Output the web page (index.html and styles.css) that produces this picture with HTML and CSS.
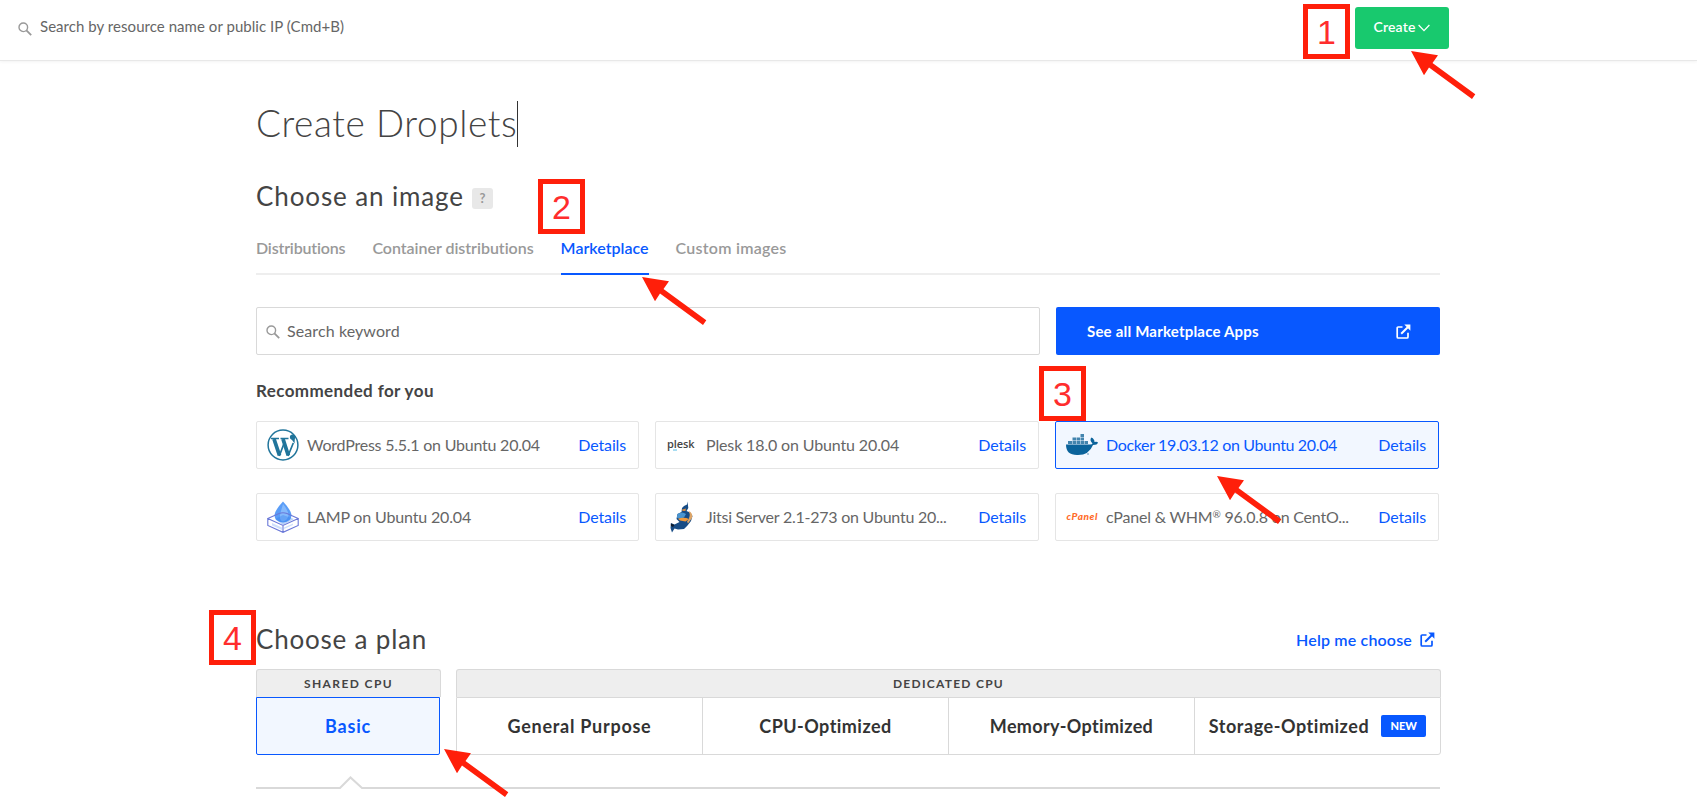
FILE: index.html
```html
<!DOCTYPE html>
<html lang="en">
<head>
<meta charset="utf-8">
<title>Create Droplets</title>
<link rel="stylesheet" href="styles.css">
</head>
<body>
<svg class="defs" width="0" height="0">
  <symbol id="search" viewBox="0 0 14 14"><circle cx="5.3" cy="5.3" r="4.3" fill="none" stroke="#999" stroke-width="1.4"/><path d="M8.4 8.4L13.2 13.2" stroke="#999" stroke-width="1.8"/></symbol>
  <symbol id="external" viewBox="0 0 15 15"><path d="M6.5 3H2.2Q1.2 3 1.2 4V13Q1.2 14 2.2 14H11Q12 14 12 13V8.8" fill="none" stroke="currentColor" stroke-width="1.7"/><path d="M5.2 9.8L12 3" stroke="currentColor" stroke-width="2"/><path d="M8.3 .6H14.4V6.7Z" fill="currentColor"/></symbol>
  <symbol id="arrow" viewBox="0 0 66 50"><path d="M0 0L27 4.3L21.500 12L64.300 43.300L61 48L18 16.500L13 24.300Z" fill="#ff1f0a"/></symbol>
</svg>
<header class="topbar">
  <div class="finder"><svg class="ico-search" width="14" height="14"><use href="#search"/></svg><span class="t-finder">Search by resource name or public IP (Cmd+B)</span></div>
  <button class="create"><span class="t-create">Create</span><svg width="12" height="8" viewBox="0 0 12 8"><path d="M.6 1L6 6.600L11.400 1" fill="none" stroke="#fff" stroke-width="1.300"/></svg></button>
</header>
<main class="page">
  <h1 class="title"><span class="t-title">Create Droplets</span><i class="caret"></i></h1>
  <div class="image-head"><h2 class="heading"><span class="t-image">Choose an image</span></h2><span class="hint">?</span></div>
  <nav class="tabs">
    <span class="tab t-tab1">Distributions</span>
    <span class="tab t-tab2">Container distributions</span>
    <span class="tab active">Marketplace</span>
    <span class="tab t-tab4">Custom images</span>
  </nav>
  <div class="search-row">
    <div class="search"><svg class="ico-search" width="14" height="14"><use href="#search"/></svg><span class="t-keyword">Search keyword</span></div>
    <div class="all-apps"><span class="t-apps">See all Marketplace Apps</span><svg width="15" height="15"><use href="#external"/></svg></div>
  </div>
  <h3 class="recommended"><span class="t-rec">Recommended for you</span></h3>
  <div class="cards">
    <div class="card">
      <svg class="logo" viewBox="0 0 32 32"><circle cx="16" cy="16" r="14.900" fill="none" stroke="#21759b" stroke-width="1.500"/><path d="M4 9.500H12M13.500 9.500H21.500" stroke="#21759b" stroke-width="1.400"/><path d="M7 10L12.500 26.500M16 10L21.300 26.500" stroke="#21759b" stroke-width="3.800"/><path d="M12.300 27L16.800 15M21 27L26.300 14" stroke="#21759b" stroke-width="1.700"/><circle cx="25.500" cy="8" r="2.600" fill="#21759b"/><path d="M22.900 8L27.500 14.500L28 7Z" fill="#21759b"/></svg>
      <span class="name t-wp">WordPress 5.5.1 on Ubuntu 20.04</span><a class="details">Details</a>
    </div>
    <div class="card">
      <svg class="logo" viewBox="0 0 32 32"><text x="1" y="18.500" textLength="27.500" class="plesk">plesk</text><path d="M7 21H11" stroke="#53bce6" stroke-width="1"/></svg>
      <span class="name t-plesk">Plesk 18.0 on Ubuntu 20.04</span><a class="details">Details</a>
    </div>
    <div class="card selected">
      <svg class="logo" viewBox="0 0 32 32"><path d="M0 15.500H24Q26.500 15.500 26.500 14.500Q23 11 25.500 8.500Q28.500 10 28.500 13Q31 12.300 32 13.500Q31.500 16 27 16Q23 26 12 26Q0 26.500 0 15.500Z" fill="#0b639b"/><path d="M2 12H6V15H2ZM6.500 12H10V15H6.500ZM10.500 12H14V15H10.500ZM14.500 12H18V15H14.500ZM18.500 12H22V15H18.500ZM6.500 8.500H10V11.500H6.500ZM10.500 8.500H14V11.500H10.500ZM14.500 8.500H18V11.500H14.500ZM14.500 5H18V8H14.500Z" fill="#4384ae"/><circle cx="22" cy="25" r="1" fill="#8fb3cc"/></svg>
      <span class="name t-docker">Docker 19.03.12 on Ubuntu 20.04</span><a class="details">Details</a>
    </div>
    <div class="card">
      <svg class="logo" viewBox="0 0 32 32"><path d="M16 .5Q24 9 24.500 14Q24.500 21 16 21.500Q7.500 21 7.500 14Q8 9 16 .5Z" fill="#5a9df7"/><path d="M16 3Q21 9 21.500 14Q21 19 16 20.500Q11 19 14 10Z" fill="#85b9fb"/><path d="M8 18L16 14L27 18L16 24Z" fill="#2f7bee" opacity=".35"/><path d="M.8 17.500L12 12.500Q16 11 20 12.500L31.200 17.500L16 24.500ZM.8 17.500V24.500L16 31.300L31.200 24.500V17.500M16 24.500V31" fill="none" stroke="#6a78d8" stroke-width="1.100"/><path d="M5 22L15 26.500V29L5 24.500ZM17 26.500L26 22.500V24L17 28Z" fill="#cfe0fc"/></svg>
      <span class="name t-lamp">LAMP on Ubuntu 20.04</span><a class="details">Details</a>
    </div>
    <div class="card">
      <svg class="logo" viewBox="0 0 32 32"><path d="M16 7L18 5L21 3.500L21.500 .5L22.300 7L20.500 10L24 11.500L26.500 15L25 20L21.500 24.500L18 28L12 28.500L8.500 27.500L6 31.500L4.500 27L5 22L8.500 23.500L13.500 21L10.500 18L11.500 13L15.500 11Z" fill="#174c86"/><path d="M11.500 13Q16 10 20 13L18 16.500Q13 18.500 10.800 16.500Z" fill="#4a94cf"/><path d="M12 17.800Q18 15.500 23 18L19.500 20.500L14 19.500Z" fill="#f39a3a"/><path d="M22.500 10Q27 11.500 26 17L22 22.500L21 20.500Q25.500 15 22.500 10Z" fill="#dda567"/><path d="M16 8.500L20 7.500L19.500 10H16.500Z" fill="#d08b45"/><path d="M4.800 22.500L8.500 24L7 26L5 25Z" fill="#101b2c"/></svg>
      <span class="name t-jitsi">Jitsi Server 2.1-273 on Ubuntu 20...</span><a class="details">Details</a>
    </div>
    <div class="card">
      <svg class="logo" viewBox="0 0 32 32"><text x=".5" y="19" textLength="31" class="cpanel">cPanel</text></svg>
      <span class="name t-cpanel">cPanel &amp; WHM<sup>®</sup> 96.0.8 on CentO...</span><a class="details">Details</a>
    </div>
  </div>
  <div class="plan-head"><h2 class="heading"><span class="t-plan">Choose a plan</span></h2><a class="help"><span class="t-help">Help me choose</span><svg width="15" height="15"><use href="#external"/></svg></a></div>
  <div class="plans">
    <section class="shared"><div class="group"><span class="t-shared">SHARED CPU</span></div><div class="basic"><span class="t-basic">Basic</span></div></section>
    <section class="dedicated"><div class="group"><span class="t-ded">DEDICATED CPU</span></div>
      <div class="options">
        <div class="option"><span class="t-gp">General Purpose</span></div>
        <div class="option"><span class="t-cpu">CPU-Optimized</span></div>
        <div class="option"><span class="t-mem">Memory-Optimized</span></div>
        <div class="option"><span class="t-sto">Storage-Optimized</span><b class="new">NEW</b></div>
      </div>
    </section>
  </div>
  <svg class="notch" width="1184" height="14" viewBox="0 0 1184 14"><path d="M0 12H84L94.500 1.500L106 12H1184" fill="none" stroke="#d9d9d9" stroke-width="2"/></svg>
</main>
<div class="mark m1">1</div><div class="mark m2">2</div><div class="mark m3">3</div><div class="mark m4">4</div>
<svg class="arrow a1"><use href="#arrow"/></svg><svg class="arrow a2"><use href="#arrow"/></svg><svg class="arrow a3"><use href="#arrow"/></svg><svg class="arrow a4"><use href="#arrow"/></svg>
</body>
</html>
```
FILE: styles.css
```css
* { box-sizing: border-box; }
body { margin: 0; position: relative; width: 1697px; height: 809px; overflow: hidden; background: #fff; color: #444; font-family: Lato, "Open Sans", sans-serif; font-size: 16px; font-variant-ligatures: none; }
h1, h2, h3 { margin: 0; font-weight: 400; white-space: nowrap; }
.defs { position: absolute; }

/* top bar */
.topbar { display: flex; justify-content: space-between; align-items: flex-start; height: 61px; padding: 7px 248px 0 18px; border-bottom: 1px solid #e8e8e8; box-shadow: 0 1px 3px rgba(0,0,0,.05); }
.finder { display: flex; gap: 8px; padding-top: 9px; font-size: 15px; line-height: 20px; color: #666; }
.finder .ico-search { margin-top: 6px; }
.t-finder { letter-spacing: .047px; }
.create { display: flex; align-items: center; justify-content: center; gap: 3px; width: 94px; height: 42px; padding: 0; border: 0; border-radius: 3px; background: #18c96e; color: #fff; font: 600 14px/18px Lato, sans-serif; }
.t-create { padding-bottom: 2px; letter-spacing: .15px; }

/* headings */
.page { width: 1184px; margin-left: 256px; padding-top: 40px; }
.title { display: flex; align-items: center; height: 46px; font-size: 37px; font-weight: 300; line-height: 46px; }
.t-title { padding-bottom: 2px; letter-spacing: .6px; }
.caret { width: 1px; height: 46px; background: #333; }
.image-head { display: flex; align-items: center; gap: 8px; height: 36px; margin-top: 32px; }
.heading { font-size: 26px; line-height: 36px; }
.image-head .heading { margin-top: -3px; }
.t-image { letter-spacing: .88px; }
.t-plan { letter-spacing: .8px; }
.hint { width: 21px; height: 21px; margin-top: 3px; border-radius: 3px; background: #e8e8e8; color: #999; font-size: 13px; font-weight: 700; line-height: 21px; text-align: center; }

/* tabs */
.tabs { display: flex; gap: 27px; height: 44px; margin-top: 16px; border-bottom: 2px solid #eee; }
.tab { height: 44px; color: #999; font-weight: 600; line-height: 34px; white-space: nowrap; }
.tab.active { border-bottom: 2px solid #0858ff; color: #0858ff; }
.t-tab1 { letter-spacing: -.17px; }
.t-tab2 { letter-spacing: -.03px; }
.t-tab4 { letter-spacing: .25px; }

/* search and recommendations */
.search-row { display: flex; gap: 16px; margin-top: 32px; }
.search { display: flex; align-items: center; gap: 7px; width: 784px; height: 48px; padding-left: 9px; border: 1px solid #d9d9d9; border-radius: 2px; color: #666; }
.search .ico-search { margin-top: 2px; }
.t-keyword { padding-bottom: 1px; letter-spacing: .1px; }
.all-apps { display: flex; align-items: center; justify-content: space-between; width: 384px; height: 48px; padding: 0 29px 0 31px; border-radius: 2px; background: #0858ff; color: #fff; font-size: 15px; font-weight: 700; }
.t-apps { letter-spacing: .2px; }
.recommended { margin-top: 24px; font-size: 17px; font-weight: 700; line-height: 24px; }
.t-rec { letter-spacing: .4px; }
.cards { display: grid; grid-template-columns: 383px 384px 384px; column-gap: 16px; row-gap: 24px; margin-top: 18px; }
.card { display: flex; align-items: center; height: 48px; padding: 0 12px 0 10px; border: 1px solid #e5e5e5; border-radius: 2px; color: #666; white-space: nowrap; }
.card.selected { border-color: #0858ff; background: #f2f7ff; color: #0858ff; }
.logo { flex: none; width: 32px; height: 32px; margin-right: 8px; }
.name { flex: 1; padding-bottom: 2px; }
.name sup { font-size: 10px; line-height: 0; vertical-align: 5px; }
.details { padding-bottom: 2px; color: #0858ff; letter-spacing: -.15px; }
.plesk { font: 600 11px "Open Sans", sans-serif; fill: #444; }
.cpanel { font: italic 900 10px Lato, sans-serif; fill: #ff6c2c; }
.t-wp { letter-spacing: -.23px; }
.t-plesk { letter-spacing: -.14px; }
.t-docker { letter-spacing: -.35px; }
.t-lamp { letter-spacing: -.16px; }
.t-jitsi { letter-spacing: -.24px; }
.t-cpanel { letter-spacing: -.21px; }

/* plans */
.plan-head { display: flex; justify-content: space-between; align-items: center; height: 36px; margin-top: 80px; padding-right: 5px; }
.help { display: flex; align-items: center; gap: 8px; color: #0858ff; font-weight: 600; }
.t-help { letter-spacing: .17px; }
.plans { display: flex; gap: 15px; margin-top: 12px; width: 1185px; }
.group { height: 28px; border: 1px solid #d9d9d9; border-bottom: 0; border-radius: 3px 3px 0 0; background: #eee; font-size: 12px; font-weight: 700; line-height: 28px; text-align: center; }
.t-shared { letter-spacing: 1.4px; }
.t-ded { letter-spacing: 1.27px; }
.shared { width: 185px; }
.basic { display: flex; align-items: center; justify-content: center; width: 184px; height: 58px; border: 1px solid #0858ff; border-radius: 0 0 2px 2px; background: #f2f7ff; color: #0858ff; font-size: 18px; font-weight: 700; }
.t-basic { letter-spacing: .8px; }
.dedicated { flex: 1; }
.options { display: grid; grid-template-columns: 245px 246px 246px 246px; height: 58px; border: 1px solid #d9d9d9; border-radius: 0 0 3px 3px; }
.option { display: flex; align-items: center; justify-content: center; gap: 12px; border-left: 1px solid #d9d9d9; color: #333; font-size: 18px; font-weight: 700; white-space: nowrap; }
.option:first-child { border-left: 0; }
.t-gp { letter-spacing: .73px; }
.t-cpu { letter-spacing: .46px; }
.t-mem { letter-spacing: .33px; }
.t-sto { letter-spacing: .54px; }
.new { width: 45px; height: 22px; border-radius: 2px; background: #0858ff; color: #fff; font-size: 11px; line-height: 22px; text-align: center; }
.notch { display: block; margin-top: 21px; }

/* numbered step markers */
.mark { position: absolute; width: 47px; height: 55px; border: 5px solid #ff1f0a; color: #ff2d2d; font: 34px/47px "Liberation Sans", Arial, sans-serif; text-align: center; }
.m1 { left: 1303px; top: 4px; }
.m2 { left: 538px; top: 179px; }
.m3 { left: 1039px; top: 366px; }
.m4 { left: 209px; top: 610px; }
.arrow { position: absolute; width: 66px; height: 50px; }
.a1 { left: 1411px; top: 51px; }
.a2 { left: 642px; top: 277px; }
.a3 { left: 1217px; top: 476px; }
.a4 { left: 444px; top: 749px; }
```
